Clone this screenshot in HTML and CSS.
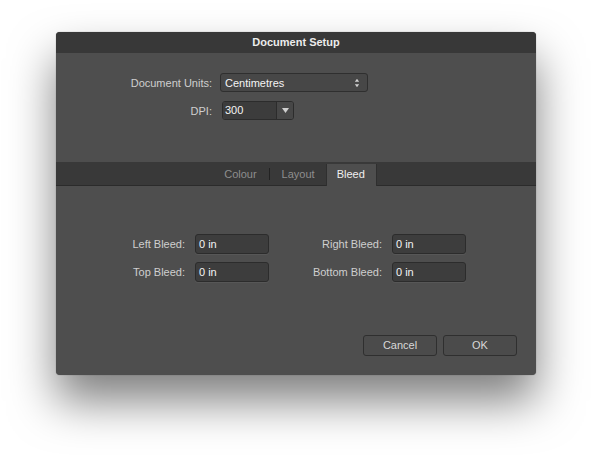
FILE: index.html
```html
<!DOCTYPE html>
<html>
<head>
<meta charset="utf-8">
<link rel="stylesheet" href="styles.css">
</head>
<body>
<div class="dialog">
  <div class="titlebar">Document Setup</div>
  <div class="top">
    <div class="form">
      <div class="label">Document Units:</div>
      <div class="select">
        <span>Centimetres</span>
        <svg class="updown" width="6" height="10" viewBox="0 0 6 10"><path d="M3 0.8 L5.2 3.8 L0.8 3.8 Z M0.8 6.2 L5.2 6.2 L3 9.2 Z" fill="#cfcfcf"/></svg>
      </div>
      <div class="label">DPI:</div>
      <div class="combo">
        <span class="combo-text">300</span>
        <span class="combo-btn"><svg width="7" height="5" viewBox="0 0 7 5"><path d="M0 0 L7 0 L3.5 5 Z" fill="#cfcfcf"/></svg></span>
      </div>
    </div>
  </div>
  <div class="tabbar">
    <div class="tab">Colour</div>
    <div class="sep"></div>
    <div class="tab layout">Layout</div>
    <div class="tab active">Bleed</div>
  </div>
  <div class="bleed">
    <div class="blabel">Left Bleed:</div>
    <div class="field">0 in</div>
    <div class="blabel">Right Bleed:</div>
    <div class="field">0 in</div>
    <div class="blabel">Top Bleed:</div>
    <div class="field">0 in</div>
    <div class="blabel">Bottom Bleed:</div>
    <div class="field">0 in</div>
  </div>
  <div class="buttons">
    <div class="btn">Cancel</div>
    <div class="btn">OK</div>
  </div>
</div>
</body>
</html>
```
FILE: styles.css
```css
html, body {
  margin: 0;
  padding: 0;
  background: #ffffff;
}
body {
  font-family: "Liberation Sans", Arial, sans-serif;
  font-size: 11px;
  padding-top: 32px;
  padding-left: 56px;
  min-height: 455px;
  box-sizing: border-box;
}
.dialog {
  width: 480px;
  height: 343px;
  background: #4e4e4e;
  border-radius: 4px;
  overflow: hidden;
  box-shadow: 0 26px 46px rgba(0, 0, 0, 0.5), 0 0 1px rgba(0,0,0,0.5);
  display: flex;
  flex-direction: column;
}
.titlebar {
  height: 21px;
  line-height: 21px;
  background: #383838;
  color: #ececec;
  font-weight: bold;
  text-align: center;
}
.top {
  height: 109px;
  padding-top: 20px;
  box-sizing: border-box;
}
.form {
  display: grid;
  grid-template-columns: 156px auto;
  column-gap: 8px;
  row-gap: 9px;
  align-items: center;
  justify-content: start;
}
.label {
  text-align: right;
  color: #cfcfcf;
}
.select {
  width: 148px;
  height: 19px;
  box-sizing: border-box;
  border: 1px solid #2f2f2f;
  border-radius: 3px;
  background: #474747;
  color: #f4f4f4;
  display: flex;
  align-items: center;
  justify-content: space-between;
  padding: 0 7px 0 4px;
}
.combo {
  margin-left: 2px;
  width: 72px;
  height: 19px;
  box-sizing: border-box;
  border: 1px solid #2c2c2c;
  border-radius: 3px;
  display: flex;
  overflow: hidden;
}
.combo-text {
  flex: 1;
  background: #3c3c3c;
  color: #f4f4f4;
  padding-left: 2px;
  line-height: 17px;
}
.combo-btn {
  width: 16px;
  border-left: 1px solid #2c2c2c;
  background: #474747;
  display: flex;
  align-items: center;
  justify-content: center;
}
.tabbar {
  height: 24px;
  box-sizing: border-box;
  background: #393939;
  border-bottom: 1px solid #2b2b2b;
  display: flex;
  justify-content: center;
  align-items: flex-end;
  padding-right: 3px;
}
.tab {
  height: 21px;
  line-height: 21px;
  padding: 0 12px;
  color: #8e8e8e;
}
.tab.layout {
  padding-right: 11px;
}
.sep {
  width: 1px;
  height: 12px;
  background: #222222;
  align-self: center;
  margin-top: 1px;
}
.tab.active {
  background: #4e4e4e;
  color: #f0f0f0;
  margin-bottom: -1px;
  height: 22px;
  padding: 0 11px 0 10px;
  border-left: 1px solid #2f2f2f;
  border-right: 1px solid #2f2f2f;
}
.bleed {
  display: grid;
  grid-template-columns: 129px 74px 103px 74px;
  column-gap: 10px;
  row-gap: 8px;
  align-items: center;
  padding-top: 48px;
}
.blabel {
  text-align: right;
  color: #cfcfcf;
}
.field {
  height: 20px;
  box-sizing: border-box;
  border: 1px solid #2c2c2c;
  border-radius: 3px;
  background: #3d3d3d;
  color: #f4f4f4;
  padding-left: 3px;
  line-height: 19px;
  box-shadow: 0 1px 0 rgba(255,255,255,0.05);
}
.buttons {
  display: flex;
  justify-content: flex-end;
  gap: 6px;
  margin-top: 53px;
  padding-right: 19px;
}
.btn {
  width: 74px;
  height: 21px;
  box-sizing: border-box;
  border: 1px solid #2f2f2f;
  border-radius: 3px;
  background: #4b4b4b;
  color: #d8d8d8;
  text-align: center;
  line-height: 19px;
}
```
